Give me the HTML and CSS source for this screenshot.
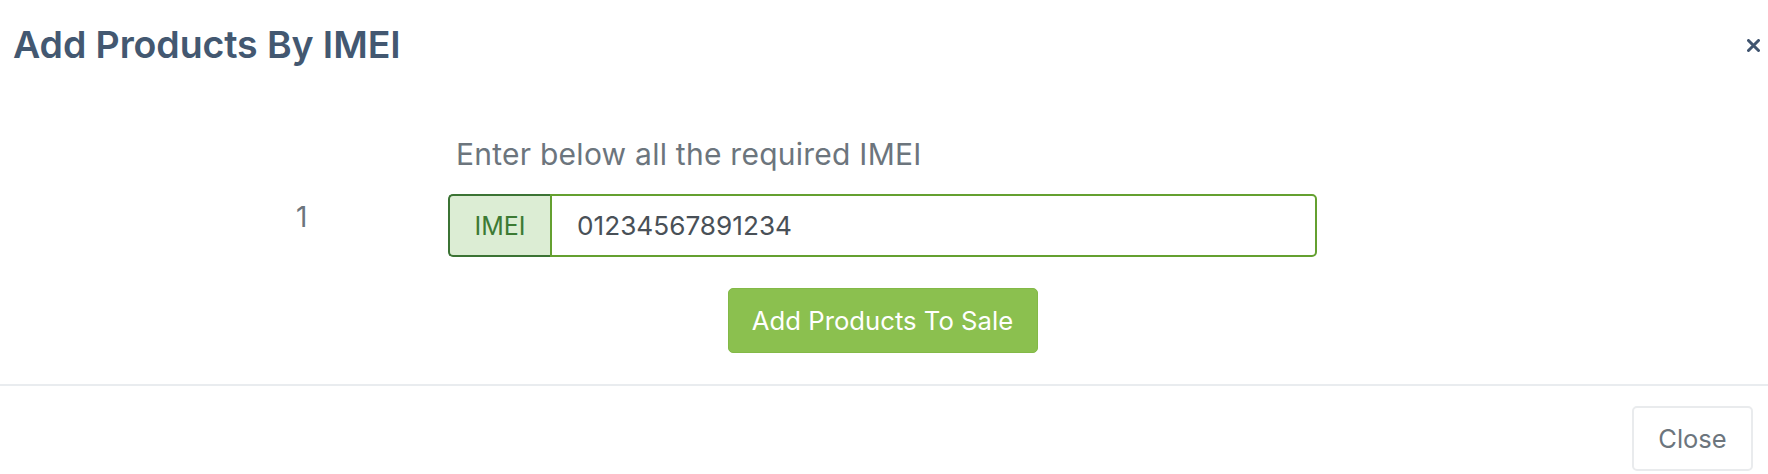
FILE: index.html
```html
<!DOCTYPE html>
<html lang="en">
<head>
<meta charset="utf-8">
<title>Add Products By IMEI</title>
<link rel="stylesheet" href="styles.css">
</head>
<body>
<div class="modal">
  <header class="modal-header">
    <h4 class="modal-title">Add Products By IMEI</h4>
    <button class="close" aria-label="Close">
      <svg width="13" height="13" viewBox="0 0 13 13"><path d="M1.5 1.5 L11.5 11.5 M11.5 1.5 L1.5 11.5" stroke="#415570" stroke-width="3" stroke-linecap="round"/></svg>
    </button>
  </header>
  <main class="modal-body">
    <div class="imei-grid">
      <p class="hint">Enter below all the required IMEI</p>
      <div class="num">1</div>
      <div class="input-group">
        <span class="addon">IMEI</span>
        <input class="field" type="text" value="01234567891234">
      </div>
      <div class="actions">
        <button class="btn-add">Add Products To Sale</button>
      </div>
    </div>
  </main>
  <footer class="modal-footer">
    <button class="btn-close">Close</button>
  </footer>
</div>
</body>
</html>
```

FILE: styles.css
```css
* { box-sizing: border-box; }

body {
  margin: 0;
  background: #ffffff;
  font-family: Inter, "Noto Sans", "Liberation Sans", sans-serif;
}

.modal {
  width: 1768px;
  background: #fff;
}

.modal-header {
  display: flex;
  justify-content: space-between;
  align-items: flex-start;
  padding: 23px 8px 0 13px;
}

.modal-title {
  margin: 0;
  font-size: 37.5px;
  line-height: 43px;
  font-weight: 600;
  color: #435871;
  letter-spacing: -0.1px;
}

.close {
  margin-top: 16px;
  padding: 0;
  border: 0;
  background: none;
  width: 13px;
  height: 13px;
  display: flex;
}

.modal-body {
  padding: 71px 0 31px 0;
}

.imei-grid {
  display: grid;
  grid-template-columns: 448px 869px;
}

.hint {
  grid-column: 2;
  grid-row: 1;
  margin: 0;
  padding-left: 8px;
  font-size: 30px;
  line-height: 34px;
  letter-spacing: 0.25px;
  color: #6c757d;
}

.num {
  grid-column: 1;
  grid-row: 2;
  padding: 29px 0 0 296px;
  font-size: 28px;
  line-height: 34px;
  color: #6c757d;
}

.input-group {
  grid-column: 2;
  grid-row: 2;
  margin-top: 23px;
  display: flex;
  height: 63px;
}

.addon {
  width: 102px;
  display: flex;
  align-items: center;
  justify-content: center;
  background: #dcedd4;
  color: #3c7a33;
  font-size: 25px;
  border: 2px solid #3b7334;
  border-right: 0;
  border-radius: 5px 0 0 5px;
}

.field {
  flex: 1;
  min-width: 0;
  border: 2px solid #64a030;
  border-radius: 0 5px 5px 0;
  padding: 0 0 0 25px;
  font-family: inherit;
  font-size: 26.2px;
  color: #495057;
  outline: none;
  background: #fff;
}

.actions {
  grid-column: 2;
  grid-row: 3;
  display: flex;
  justify-content: center;
  margin-top: 31px;
}

.btn-add {
  width: 310px;
  height: 65px;
  background: #8bc04f;
  border: 1px solid #83b947;
  border-radius: 5px;
  color: #ffffff;
  font-family: inherit;
  font-size: 25.7px;
}

.modal-footer {
  border-top: 2px solid #e9ecef;
  display: flex;
  justify-content: flex-end;
  padding: 20px 15px 3px 0;
}

.btn-close {
  width: 121px;
  height: 65px;
  background: #fff;
  border: 2px solid #e9ebed;
  border-radius: 5px;
  color: #6c757d;
  font-family: inherit;
  font-size: 25.5px;
}
```
